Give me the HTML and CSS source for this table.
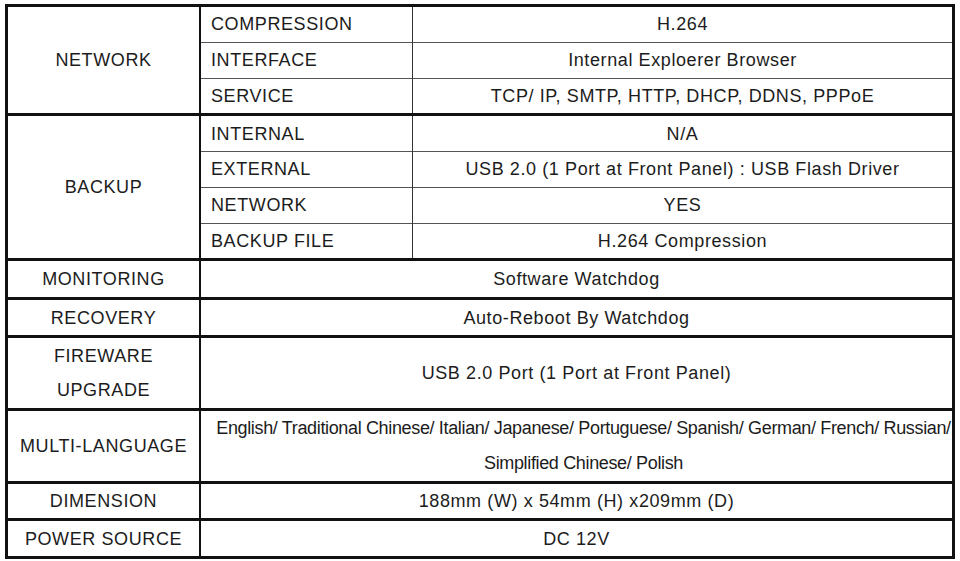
FILE: index.html
```html
<!DOCTYPE html>
<html lang="en">
<head>
<meta charset="utf-8">
<title>Specifications</title>
<link rel="stylesheet" href="styles.css">
</head>
<body>
<table class="spec">
  <tbody class="group">
    <tr><th rowspan="3" class="cat">NETWORK</th><td class="sub">COMPRESSION</td><td class="val">H.264</td></tr>
    <tr class="thin"><td class="sub">INTERFACE</td><td class="val">Internal Exploerer Browser</td></tr>
    <tr class="thin"><td class="sub">SERVICE</td><td class="val">TCP/ IP, SMTP, HTTP, DHCP, DDNS, PPPoE</td></tr>
  </tbody>
  <tbody class="group">
    <tr><th rowspan="4" class="cat">BACKUP</th><td class="sub">INTERNAL</td><td class="val">N/A</td></tr>
    <tr class="thin"><td class="sub">EXTERNAL</td><td class="val">USB 2.0 (1 Port at Front Panel) : USB Flash Driver</td></tr>
    <tr class="thin"><td class="sub">NETWORK</td><td class="val">YES</td></tr>
    <tr class="thin"><td class="sub">BACKUP FILE</td><td class="val">H.264 Compression</td></tr>
  </tbody>
  <tbody class="group">
    <tr class="tall"><th class="cat">MONITORING</th><td class="val" colspan="2">Software Watchdog</td></tr>
  </tbody>
  <tbody class="group">
    <tr><th class="cat">RECOVERY</th><td class="val" colspan="2">Auto-Reboot By Watchdog</td></tr>
  </tbody>
  <tbody class="group">
    <tr class="double"><th class="cat">FIREWARE<br>UPGRADE</th><td class="val" colspan="2">USB 2.0 Port (1 Port at Front Panel)</td></tr>
  </tbody>
  <tbody class="group">
    <tr class="double"><th class="cat">MULTI-LANGUAGE</th><td class="val lang" colspan="2"><span class="tight">English/ Traditional Chinese/ Italian/ Japanese/ Portuguese/ Spanish/ German/ French/ Russian/</span><br><span class="tight">Simplified Chinese/ Polish</span></td></tr>
  </tbody>
  <tbody class="group">
    <tr><th class="cat">DIMENSION</th><td class="val" colspan="2">188mm (W) x 54mm (H) x209mm (D)</td></tr>
  </tbody>
  <tbody class="group">
    <tr><th class="cat">POWER SOURCE</th><td class="val" colspan="2">DC 12V</td></tr>
  </tbody>
</table>
</body>
</html>
```
FILE: styles.css
```css
html, body {
  margin: 0;
  padding: 0;
  background: #ffffff;
}

body {
  padding: 4px 0 0 5px;
  font-family: "Liberation Sans", Arial, sans-serif;
  color: #1c1c1c;
}

.spec {
  border-collapse: collapse;
  width: 950px;
  border: 3px solid #111;
  font-size: 18px;
  letter-spacing: 0.6px;
}

.spec .group {
  border-top: 3px solid #111;
}

.spec th,
.spec td {
  height: 34.75px;
  padding: 0;
  font-weight: normal;
  vertical-align: middle;
  line-height: 34px;
}

.spec .tall th,
.spec .tall td {
  height: 36px;
}

.spec .cat {
  width: 191px;
  text-align: center;
  border-right: 2px solid #111;
}

.spec .sub {
  width: 201px;
  text-align: left;
  padding-left: 10px;
  border-right: 1px solid #333;
}

.spec .val {
  text-align: center;
}

.spec .thin td {
  border-top: 1px solid #555;
}

.spec .double th,
.spec .double td {
  height: 69.75px;
}

.spec .lang {
  line-height: 34.85px;
  white-space: nowrap;
  padding-left: 14px;
}

.spec .tight {
  letter-spacing: -0.35px;
}
```
